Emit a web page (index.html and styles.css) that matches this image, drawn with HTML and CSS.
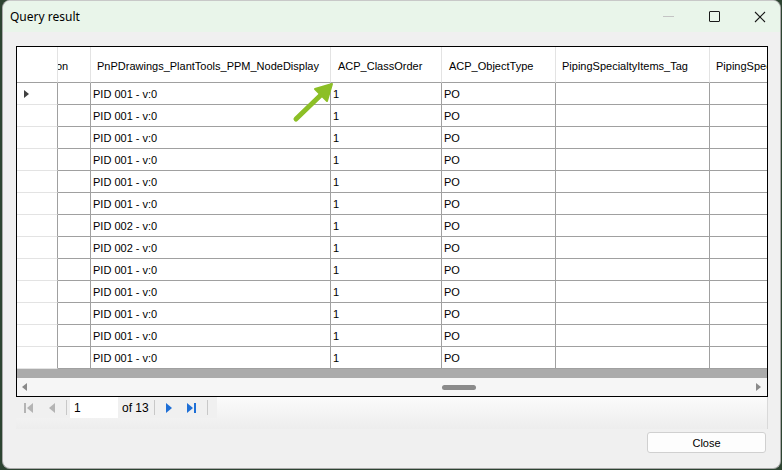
FILE: index.html
```html
<!DOCTYPE html>
<html>
<head>
<meta charset="utf-8">
<link rel="stylesheet" href="styles.css">
</head>
<body>
<div class="window">
  <div class="titlebar">
    <span class="title">Query result</span>
    <div class="controls">
      <span class="ctl ctl-min"></span>
      <span class="ctl ctl-max"></span>
      <span class="ctl ctl-close">
        <svg width="12" height="12" viewBox="0 0 12 12"><path d="M1 1L11 11M11 1L1 11" stroke="#1a1a1a" stroke-width="1.1" fill="none"/></svg>
      </span>
    </div>
  </div>
  <div class="content">
    <div class="grid">
      <div class="rows">
        <div class="row head">
          <div class="cell rh"></div>
          <div class="cell"><span class="clip">on</span></div>
          <div class="cell">PnPDrawings_PlantTools_PPM_NodeDisplay</div>
          <div class="cell">ACP_ClassOrder</div>
          <div class="cell">ACP_ObjectType</div>
          <div class="cell">PipingSpecialtyItems_Tag</div>
          <div class="cell">PipingSpecialtyItems_Size</div>
        </div>
        <div class="row"><div class="cell rh"><span class="cur"></span></div><div class="cell"></div><div class="cell">PID 001 - v:0</div><div class="cell">1</div><div class="cell">PO</div><div class="cell"></div><div class="cell"></div></div>
        <div class="row"><div class="cell rh"></div><div class="cell"></div><div class="cell">PID 001 - v:0</div><div class="cell">1</div><div class="cell">PO</div><div class="cell"></div><div class="cell"></div></div>
        <div class="row"><div class="cell rh"></div><div class="cell"></div><div class="cell">PID 001 - v:0</div><div class="cell">1</div><div class="cell">PO</div><div class="cell"></div><div class="cell"></div></div>
        <div class="row"><div class="cell rh"></div><div class="cell"></div><div class="cell">PID 001 - v:0</div><div class="cell">1</div><div class="cell">PO</div><div class="cell"></div><div class="cell"></div></div>
        <div class="row"><div class="cell rh"></div><div class="cell"></div><div class="cell">PID 001 - v:0</div><div class="cell">1</div><div class="cell">PO</div><div class="cell"></div><div class="cell"></div></div>
        <div class="row"><div class="cell rh"></div><div class="cell"></div><div class="cell">PID 001 - v:0</div><div class="cell">1</div><div class="cell">PO</div><div class="cell"></div><div class="cell"></div></div>
        <div class="row"><div class="cell rh"></div><div class="cell"></div><div class="cell">PID 002 - v:0</div><div class="cell">1</div><div class="cell">PO</div><div class="cell"></div><div class="cell"></div></div>
        <div class="row"><div class="cell rh"></div><div class="cell"></div><div class="cell">PID 002 - v:0</div><div class="cell">1</div><div class="cell">PO</div><div class="cell"></div><div class="cell"></div></div>
        <div class="row"><div class="cell rh"></div><div class="cell"></div><div class="cell">PID 001 - v:0</div><div class="cell">1</div><div class="cell">PO</div><div class="cell"></div><div class="cell"></div></div>
        <div class="row"><div class="cell rh"></div><div class="cell"></div><div class="cell">PID 001 - v:0</div><div class="cell">1</div><div class="cell">PO</div><div class="cell"></div><div class="cell"></div></div>
        <div class="row"><div class="cell rh"></div><div class="cell"></div><div class="cell">PID 001 - v:0</div><div class="cell">1</div><div class="cell">PO</div><div class="cell"></div><div class="cell"></div></div>
        <div class="row"><div class="cell rh"></div><div class="cell"></div><div class="cell">PID 001 - v:0</div><div class="cell">1</div><div class="cell">PO</div><div class="cell"></div><div class="cell"></div></div>
        <div class="row"><div class="cell rh"></div><div class="cell"></div><div class="cell">PID 001 - v:0</div><div class="cell">1</div><div class="cell">PO</div><div class="cell"></div><div class="cell"></div></div>
      </div>
      <div class="filler"></div>
      <div class="hscroll">
        <span class="arr arr-l"></span>
        <div class="track"><span class="thumb"></span></div>
        <span class="arr arr-r"></span>
      </div>
    </div>
    <div class="navbar">
      <div class="nav">
        <span class="nbtn">
          <svg width="12" height="12" viewBox="0 0 12 12"><rect x="1" y="1" width="2" height="10" fill="#b4b4b4"/><path d="M10 1L4 6L10 11Z" fill="#b4b4b4"/></svg>
        </span>
        <span class="nbtn">
          <svg width="12" height="12" viewBox="0 0 12 12"><path d="M9 1L3 6L9 11Z" fill="#b4b4b4"/></svg>
        </span>
        <span class="sep"></span>
        <span class="pos">1</span>
        <span class="of">of 13</span>
        <span class="sep"></span>
        <span class="nbtn">
          <svg width="12" height="12" viewBox="0 0 12 12"><path d="M3 1L9 6L3 11Z" fill="#1e6fd6"/></svg>
        </span>
        <span class="nbtn">
          <svg width="12" height="12" viewBox="0 0 12 12"><path d="M1 1L7 6L1 11Z" fill="#1e6fd6"/><rect x="8" y="1" width="2" height="10" fill="#1e6fd6"/></svg>
        </span>
        <span class="sep"></span>
      </div>
    </div>
    <div class="footer">
      <button class="btn">Close</button>
    </div>
  </div>
  <svg class="annot" width="60" height="50" viewBox="0 0 60 50">
    <path d="M8 40L36 13" stroke="#8cbf26" stroke-width="5" stroke-linecap="round" fill="none"/>
    <path d="M44 5L27 10L39 22Z" fill="#8cbf26" stroke="#8cbf26" stroke-width="2" stroke-linejoin="round"/>
  </svg>
</div>
</body>
</html>
```
FILE: styles.css
```css
html, body {
  margin: 0;
  padding: 0;
}
body {
  width: 782px;
  height: 470px;
  overflow: hidden;
  background: #2d4431;
  font-family: "Liberation Sans", Arial, sans-serif;
}
.window {
  position: relative;
  margin-left: 2px;
  width: 777px;
  height: 467px;
  background: #f0f0f0;
  border: 1px solid #a8a8a8;
  border-top-color: #c8c8c8;
  border-radius: 8px;
  overflow: hidden;
  display: flex;
  flex-direction: column;
}
.titlebar {
  height: 31px;
  background: #e9f5ea;
  display: flex;
  align-items: center;
  justify-content: space-between;
  flex-shrink: 0;
}
.title {
  padding-left: 7px;
  color: #000;
  font-family: "Noto Sans", "Liberation Sans", sans-serif;
  font-size: 12px;
}
.controls {
  display: flex;
  align-items: center;
  height: 31px;
  margin-right: -3px;
}
.ctl {
  width: 46px;
  height: 31px;
  display: flex;
  align-items: center;
  justify-content: center;
}
.ctl-min::before {
  content: "";
  width: 11px;
  height: 1px;
  background: #c4c4c4;
}
.ctl-max::before {
  content: "";
  width: 9px;
  height: 9px;
  border: 1px solid #1a1a1a;
  border-radius: 1px;
}
.content {
  flex: 1;
  padding: 14px 13px 0 13px;
  display: flex;
  flex-direction: column;
}
.grid {
  width: 752px;
  height: 351px;
  box-sizing: border-box;
  border: 1px solid #000;
  background: #ababab;
  display: flex;
  flex-direction: column;
  overflow: hidden;
}
.rows {
  background: #fff;
  flex-shrink: 0;
}
.row {
  display: grid;
  grid-template-columns: 41px 33px 240px 111px 114px 154px 120px;
  height: 22px;
  font-size: 11px;
  color: #000;
}
.row.head {
  height: 36px;
}
.cell {
  box-sizing: border-box;
  border-right: 1px solid #a0a0a0;
  border-bottom: 1px solid #a0a0a0;
  padding-left: 2px;
  display: flex;
  align-items: center;
  white-space: nowrap;
  overflow: hidden;
}
.head .cell {
  border-right-color: #e3e3e3;
  padding-left: 6px;
  padding-top: 2px;
}
.head .cell:nth-child(4),
.head .cell:nth-child(5) {
  padding-left: 7px;
}
.cell.rh {
  border-bottom-color: #e3e3e3;
}
.row:not(.head) .cell.rh {
  border-right-color: #a0a0a0;
}
.head .cell.rh {
  border-bottom-color: #a0a0a0;
}
.clip {
  margin-left: -8px;
}
.cur {
  margin-left: 5px;
  width: 0;
  height: 0;
  border-top: 4px solid transparent;
  border-bottom: 4px solid transparent;
  border-left: 5px solid #404040;
}
.filler {
  height: 9px;
  flex-shrink: 0;
}
.hscroll {
  flex: 1;
  background: #f6f6f6;
  display: flex;
  align-items: center;
}
.arr {
  width: 0;
  height: 0;
  border-top: 4px solid transparent;
  border-bottom: 4px solid transparent;
}
.arr-l {
  margin-left: 5px;
  border-right: 5px solid #8a8a8a;
}
.arr-r {
  margin-right: 6px;
  border-left: 5px solid #8a8a8a;
}
.track {
  flex: 1;
  height: 17px;
  display: flex;
  align-items: center;
}
.thumb {
  margin-left: 415px;
  width: 34px;
  height: 5px;
  border-radius: 3px;
  background: #8b8b8b;
}
.navbar {
  width: 752px;
  height: 32px;
  box-sizing: border-box;
  background: linear-gradient(#fbfbfb, #ededed);
  border-right: 1px solid #d9d9d9;
}
.nav {
  height: 21px;
  display: flex;
  align-items: center;
  padding-left: 1px;
  background: #f0f0f0;
  width: 200px;
  font-size: 12px;
}
.nbtn {
  width: 23px;
  height: 21px;
  display: flex;
  align-items: center;
  justify-content: center;
}
.sep {
  width: 1px;
  height: 15px;
  background: #c8c8c8;
  margin: 0 3px;
}
.pos {
  width: 44px;
  height: 21px;
  background: #fff;
  padding-left: 4px;
  display: flex;
  align-items: center;
}
.of {
  padding: 0 2px 0 4px;
}
.footer {
  display: flex;
  justify-content: flex-end;
  padding-top: 3px;
  width: 750px;
}
.btn {
  width: 119px;
  height: 21px;
  background: #fdfdfd;
  border: 1px solid #d0d0d0;
  border-radius: 3px;
  font-family: "Liberation Sans", Arial, sans-serif;
  font-size: 11px;
  color: #000;
  padding: 0;
}
.annot {
  position: absolute;
  left: 285px;
  top: 78px;
}
```
